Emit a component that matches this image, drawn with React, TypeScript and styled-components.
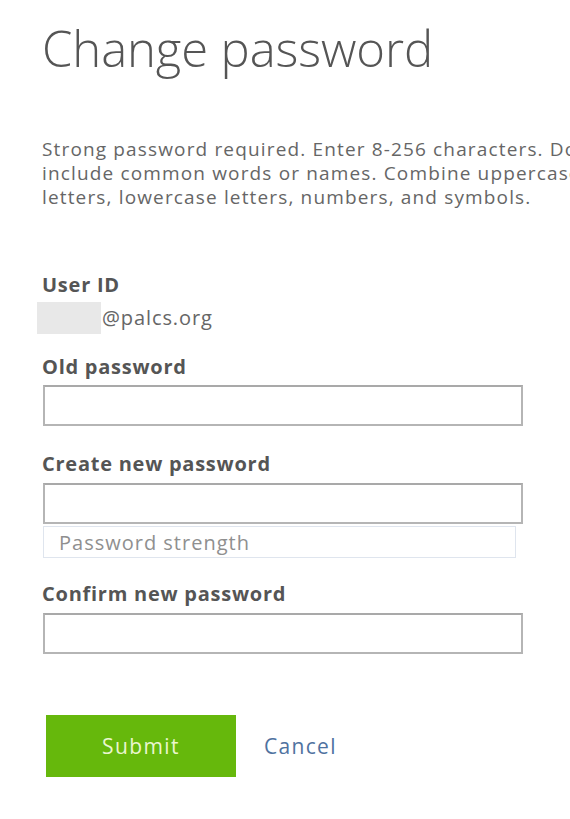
import React from "react";
import styled, { createGlobalStyle } from "styled-components";

const Global = createGlobalStyle`
  html, body {
    margin: 0;
    padding: 0;
    background: #ffffff;
    overflow: hidden;
  }
  body {
    font-family: "Open Sans", "Noto Sans", sans-serif;
  }
`;

const Page = styled.main`
  width: 570px;
  height: 819px;
  padding: 0 0 0 42px;
  box-sizing: border-box;
  display: flex;
  flex-direction: column;
  overflow: hidden;
`;

const Title = styled.h1`
  margin: 14px 0 0 0;
  font-size: 49px;
  line-height: 68px;
  font-weight: 300;
  letter-spacing: -0.1px;
  color: #555555;
  white-space: nowrap;
`;

const Intro = styled.p`
  margin: 55px 0 0 0;
  font-size: 19px;
  letter-spacing: 1.15px;
  line-height: 24px;
  color: #666666;
  white-space: nowrap;
`;

const Field = styled.div<{ $top: number }>`
  display: flex;
  flex-direction: column;
  margin-top: ${(p) => p.$top}px;
`;

const Label = styled.label`
  font-size: 20px;
  letter-spacing: 0.75px;
  line-height: 24px;
  font-weight: 700;
  color: #555555;
`;

const UserRow = styled.div`
  display: flex;
  align-items: center;
  margin-top: 5px;
  margin-left: -5px;
  height: 32px;
`;

const Redacted = styled.span`
  width: 64px;
  height: 32px;
  background: #e8e8e8;
`;

const UserDomain = styled.span`
  font-size: 20px;
  letter-spacing: 0.9px;
  color: #666666;
  line-height: 32px;
  margin-left: 1px;
`;

const Input = styled.input<{ $gap: number }>`
  box-sizing: border-box;
  width: 480px;
  height: 41px;
  margin-top: ${(p) => p.$gap}px;
  margin-left: 1px;
  border: 2px solid #b5b5b5;
  border-top-color: #a9a9a9;
  background: #ffffff;
  padding: 0 10px;
  font-size: 16px;
  outline: none;
`;

const Strength = styled.div`
  box-sizing: border-box;
  width: 473px;
  height: 32px;
  margin-top: 2px;
  margin-left: 1px;
  border: 1px solid #dfe5ee;
  padding-left: 15px;
  display: flex;
  align-items: center;
  font-size: 20px;
  letter-spacing: 1px;
  color: #8f8f8f;
`;

const Actions = styled.div`
  display: flex;
  align-items: center;
  gap: 28px;
  margin-top: 61px;
  margin-left: 4px;
`;

const SubmitButton = styled.button`
  width: 190px;
  height: 62px;
  border: none;
  background: #66b80c;
  color: #eaf6cf;
  font-family: "Open Sans", "Noto Sans", sans-serif;
  font-size: 21px;
  letter-spacing: 1.4px;
  cursor: pointer;
`;

const CancelLink = styled.a`
  font-size: 21px;
  letter-spacing: 1.3px;
  color: #4f72a0;
  text-decoration: none;
  cursor: pointer;
`;

export default function App() {
  return (
    <>
      <Global />
      <Page>
        <Title>Change password</Title>
        <Intro>
          Strong password required. Enter 8-256 characters. Do not
          <br />
          include common words or names. Combine uppercase
          <br />
          letters, lowercase letters, numbers, and symbols.
        </Intro>
        <Field $top={64}>
          <Label>User ID</Label>
          <UserRow>
            <Redacted />
            <UserDomain>@palcs.org</UserDomain>
          </UserRow>
        </Field>
        <Field $top={21}>
          <Label htmlFor="old">Old password</Label>
          <Input id="old" type="password" $gap={6} />
        </Field>
        <Field $top={26}>
          <Label htmlFor="new">Create new password</Label>
          <Input id="new" type="password" $gap={7} />
          <Strength>Password strength</Strength>
        </Field>
        <Field $top={24}>
          <Label htmlFor="confirm">Confirm new password</Label>
          <Input id="confirm" type="password" $gap={7} />
        </Field>
        <Actions>
          <SubmitButton type="button">Submit</SubmitButton>
          <CancelLink>Cancel</CancelLink>
        </Actions>
      </Page>
    </>
  );
}
